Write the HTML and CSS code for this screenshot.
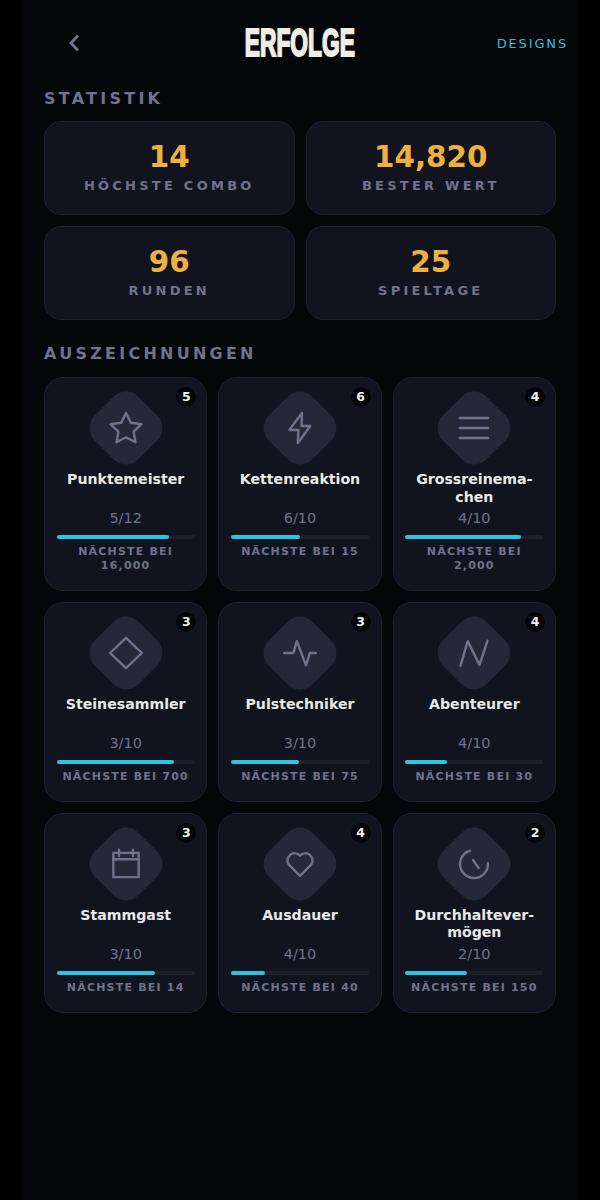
FILE: index.html
```html
<!DOCTYPE html>
<html lang="de">
<head>
<meta charset="utf-8">
<title>Erfolge</title>
<link rel="stylesheet" href="styles.css">
</head>
<body>
<main class="app">
  <header class="top">
    <button class="back" aria-label="Zurück"><svg viewBox="0 0 12 18" width="12" height="18"><path d="M10 1.5 3 9l7 7.5"/></svg></button>
    <h1 class="title"><span>ERFOLGE</span></h1>
    <a class="designs">DESIGNS</a>
  </header>

  <h2 class="section first">STATISTIK</h2>
  <section class="stats">
    <div class="stat"><div class="value">14</div><div class="label">HÖCHSTE COMBO</div></div>
    <div class="stat"><div class="value">14,820</div><div class="label">BESTER WERT</div></div>
    <div class="stat"><div class="value">96</div><div class="label">RUNDEN</div></div>
    <div class="stat"><div class="value">25</div><div class="label">SPIELTAGE</div></div>
  </section>

  <h2 class="section second">AUSZEICHNUNGEN</h2>
  <section class="awards">
    <article class="card">
      <span class="badge">5</span>
      <div class="gem"><svg class="icon" viewBox="0 0 24 24"><polygon points="12 2.5 15 8.7 21.8 9.6 16.8 14.3 18 21 12 17.8 6 21 7.2 14.3 2.2 9.6 9 8.7"/></svg></div>
      <h3 class="name">Punktemeister</h3>
      <div class="count">5/12</div>
      <div class="bar"><div class="fill" style="width:81%"></div></div>
      <p class="next">NÄCHSTE BEI 16,000</p>
    </article>
    <article class="card">
      <span class="badge">6</span>
      <div class="gem"><svg class="icon" viewBox="0 0 24 24"><polygon points="13.2 2.5 5.3 13.3 11 13.3 10.6 21.5 18.5 10.7 13 10.7"/></svg></div>
      <h3 class="name">Kettenreaktion</h3>
      <div class="count">6/10</div>
      <div class="bar"><div class="fill" style="width:50%"></div></div>
      <p class="next">NÄCHSTE BEI 15</p>
    </article>
    <article class="card">
      <span class="badge">4</span>
      <div class="gem"><svg class="icon" viewBox="0 0 24 24"><path d="M3 5.7h18M3 12h18M3 18.3h18"/></svg></div>
      <h3 class="name">Grossreinema&shy;chen</h3>
      <div class="count">4/10</div>
      <div class="bar"><div class="fill" style="width:84%"></div></div>
      <p class="next">NÄCHSTE BEI 2,000</p>
    </article>
    <article class="card">
      <span class="badge">3</span>
      <div class="gem"><svg class="icon" viewBox="0 0 24 24"><polygon points="12 2.5 22 12 12 21.5 2 12"/></svg></div>
      <h3 class="name">Steinesammler</h3>
      <div class="count">3/10</div>
      <div class="bar"><div class="fill" style="width:85%"></div></div>
      <p class="next">NÄCHSTE BEI 700</p>
    </article>
    <article class="card">
      <span class="badge">3</span>
      <div class="gem"><svg class="icon" viewBox="0 0 24 24"><path d="M2 12h5.8L10 4.5l5.8 15.3L18.2 12H22"/></svg></div>
      <h3 class="name">Pulstechniker</h3>
      <div class="count">3/10</div>
      <div class="bar"><div class="fill" style="width:49%"></div></div>
      <p class="next">NÄCHSTE BEI 75</p>
    </article>
    <article class="card">
      <span class="badge">4</span>
      <div class="gem"><svg class="icon" viewBox="0 0 24 24"><path d="M3.5 20 8 4.5 15.5 19.5 20.5 4.3"/></svg></div>
      <h3 class="name">Abenteurer</h3>
      <div class="count">4/10</div>
      <div class="bar"><div class="fill" style="width:30%"></div></div>
      <p class="next">NÄCHSTE BEI 30</p>
    </article>
    <article class="card">
      <span class="badge">3</span>
      <div class="gem"><svg class="icon" viewBox="0 0 24 24"><path d="M4 5h16v15.3H4zM4 9h16M7.6 3v4M16.4 3v4"/></svg></div>
      <h3 class="name">Stammgast</h3>
      <div class="count">3/10</div>
      <div class="bar"><div class="fill" style="width:71%"></div></div>
      <p class="next">NÄCHSTE BEI 14</p>
    </article>
    <article class="card">
      <span class="badge">4</span>
      <div class="gem"><svg class="icon" viewBox="0 0 24 24"><path d="M12 19.5 5.2 12.7A4.5 4.5 0 0 1 12 6.8a4.5 4.5 0 0 1 6.8 5.9z"/></svg></div>
      <h3 class="name">Ausdauer</h3>
      <div class="count">4/10</div>
      <div class="bar"><div class="fill" style="width:25%"></div></div>
      <p class="next">NÄCHSTE BEI 40</p>
    </article>
    <article class="card">
      <span class="badge">2</span>
      <div class="gem"><svg class="icon" viewBox="0 0 24 24"><path d="M9.5 3.6A8.8 8.8 0 1 0 20.8 11.5M11.4 9.5l3.5 5"/></svg></div>
      <h3 class="name">Durchhaltever&shy;mögen</h3>
      <div class="count">2/10</div>
      <div class="bar"><div class="fill" style="width:45%"></div></div>
      <p class="next">NÄCHSTE BEI 150</p>
    </article>
  </section>
</main>
</body>
</html>
```
FILE: styles.css
```css
* { box-sizing: border-box; }
html, body { margin: 0; padding: 0; background: #000; }
body { font-family: "DejaVu Sans", sans-serif; color: #e9e9ea; }

.app {
  width: 555px;
  height: 1200px;
  margin: 0 auto;
  padding: 0 21.5px;
  background: #05060a;
  overflow: hidden;
}

.top {
  display: grid;
  grid-template-columns: 1fr auto 1fr;
  align-items: center;
  height: 86px;
  margin: 0 -12px;
}
.back {
  justify-self: start;
  display: flex;
  margin-left: 36px;
  padding: 0;
  border: 0;
  background: none;
}
.back svg { fill: none; stroke: #70738a; stroke-width: 2.8; }
.title {
  margin: 0;
  padding-bottom: 1px;
  width: 112px;
  display: flex;
  justify-content: center;
  font: 700 38px/46px "Liberation Sans", sans-serif;
  color: #efede6;
}
.title span {
  display: inline-block;
  transform: scaleX(.6);
  -webkit-text-stroke: 2px #efede6;
}
.designs {
  justify-self: end;
  font-size: 13px;
  letter-spacing: 1.85px;
  color: #33bedd;
}

.section {
  margin: 0;
  font-size: 16px;
  line-height: 18px;
  font-weight: 700;
  letter-spacing: 3.25px;
  color: #70738a;
}
.section.first { padding-top: 4px; margin-bottom: 13px; }
.section.second { margin-top: 25px; margin-bottom: 14px; }

.stats {
  display: grid;
  grid-template-columns: 1fr 1fr;
  gap: 11px;
}
.stat {
  height: 94px;
  padding-top: 17px;
  text-align: center;
  background: #11141f;
  border: 1px solid #1e2130;
  border-radius: 17px;
}
.value {
  font-size: 29.4px;
  line-height: 36px;
  font-weight: 700;
  color: #f0b03f;
}
.label {
  margin-top: 3px;
  font-size: 13px;
  line-height: 16px;
  font-weight: 700;
  letter-spacing: 3.25px;
  color: #70738a;
}

.awards {
  display: grid;
  grid-template-columns: repeat(3, 1fr);
  gap: 11px;
}
.card {
  position: relative;
  display: flex;
  flex-direction: column;
  padding: 14px 11.5px 17.5px;
  text-align: center;
  background: #11141f;
  border: 1px solid #1e2130;
  border-radius: 19px;
}
.badge {
  position: absolute;
  top: 8px;
  right: 9px;
  width: 22px;
  height: 22px;
  font-size: 12.5px;
  font-weight: 700;
  line-height: 20px;
  color: #f1f1f1;
  background: #030406;
  border: 1px solid #161925;
  border-radius: 50%;
}
.gem {
  align-self: center;
  width: 62px;
  height: 62px;
  margin: 5px 0;
  display: flex;
  align-items: center;
  justify-content: center;
  background: #262838;
  border-radius: 18px;
  transform: rotate(45deg);
}
.icon {
  flex: none;
  width: 38px;
  height: 38px;
  transform: rotate(-45deg);
  fill: none;
  stroke: #70738a;
  stroke-width: 1.5;
  stroke-linejoin: round;
  stroke-linecap: round;
}
.name {
  margin: 7px 0 0;
  min-height: 35px;
  font-size: 14.15px;
  line-height: 17.5px;
  font-weight: 700;
  color: #e9e9ea;
  hyphens: manual;
}
.count {
  margin-top: 2px;
  font-size: 14.5px;
  line-height: 20px;
  color: #70738a;
}
.bar {
  height: 4px;
  margin-top: 7px;
  background: #1e2029;
  border-radius: 2px;
}
.fill {
  height: 100%;
  background: #2bc4e2;
  border-radius: 2px;
}
.next {
  margin: 6px 0 0;
  font-size: 11px;
  line-height: 13.5px;
  font-weight: 700;
  letter-spacing: 1.2px;
  color: #70738a;
}
```
